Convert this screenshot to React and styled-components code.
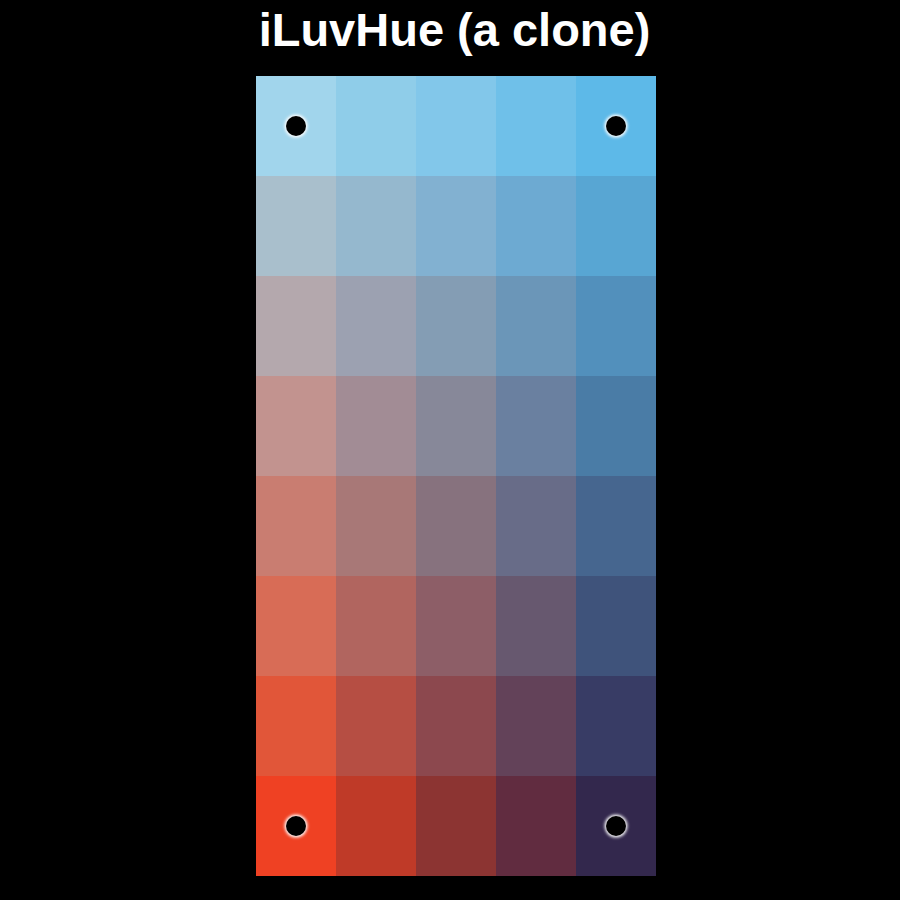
import React from "react";
import styled, { createGlobalStyle } from "styled-components";

const Global = createGlobalStyle`
  html, body {
    margin: 0;
    padding: 0;
    background: #000;
  }
`;

const Page = styled.main`
  display: flex;
  flex-direction: column;
  align-items: center;
  padding-left: 12px;
  background: #000;
  min-height: 900px;
  box-sizing: border-box;
`;

const Title = styled.h1`
  margin: 7px 0 23px -3px;
  font-family: "Liberation Sans", Arial, sans-serif;
  font-weight: 700;
  font-size: 47px;
  line-height: 46px;
  color: #fff;
`;

const Board = styled.div`
  display: grid;
  grid-template-columns: repeat(5, 80px);
  grid-auto-rows: 100px;
`;

const Tile = styled.div`
  position: relative;
  background: ${(p) => p.$color};
`;

const Lock = styled.span`
  position: absolute;
  left: 50%;
  top: 50%;
  width: 20px;
  height: 20px;
  margin: -10px 0 0 -10px;
  border-radius: 50%;
  background: #000;
  box-shadow: 0 0 3px 1.5px rgba(255, 255, 255, 0.95);
`;

const colors = [
  ["#A1D5EC", "#8FCDE9", "#82C7EA", "#6FC0E9", "#5DB9E8"],
  ["#A9BFCC", "#95B8CE", "#82B1D1", "#6DAAD2", "#58A6D3"],
  ["#B4A8AD", "#9CA1B1", "#849DB4", "#6B96B8", "#5290BC"],
  ["#C2938F", "#A28C95", "#878899", "#6A80A0", "#4A7CA6"],
  ["#C97D71", "#A87877", "#87727E", "#686C88", "#46668F"],
  ["#D86C56", "#B1655F", "#8D5E67", "#67586F", "#3F537B"],
  ["#E15639", "#B64E43", "#8C484E", "#634259", "#383C65"],
  ["#EF4123", "#BF3A28", "#8C3432", "#612C40", "#33284D"],
];

const isLocked = (r, c) => (r === 0 || r === 7) && (c === 0 || c === 4);

export default function App() {
  return (
    <>
      <Global />
      <Page>
        <Title>iLuvHue (a clone)</Title>
        <Board>
          {colors.map((row, r) =>
            row.map((color, c) => (
              <Tile key={`${r}-${c}`} $color={color}>
                {isLocked(r, c) && <Lock />}
              </Tile>
            ))
          )}
        </Board>
      </Page>
    </>
  );
}
